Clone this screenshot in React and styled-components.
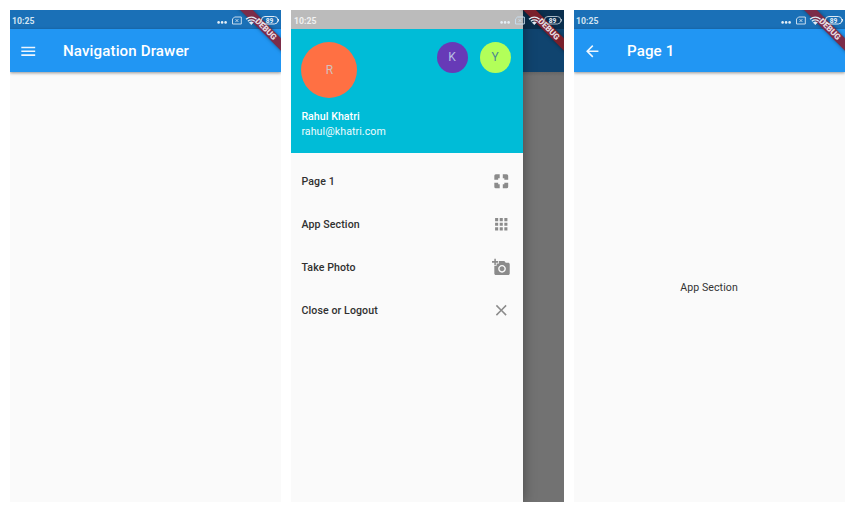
import React from "react";
import styled, { createGlobalStyle } from "styled-components";
import { MdMenu, MdArrowBack, MdApps, MdAddAPhoto, MdClose } from "react-icons/md";

const GlobalStyle = createGlobalStyle`
  * { box-sizing: border-box; }
  body { margin: 0; background: #fff; font-family: Roboto, sans-serif; }
`;

const Gallery = styled.main`
  display: flex;
  gap: 10px;
  width: 855px;
  height: 512px;
  padding: 10px;
`;

const Phone = styled.section`
  position: relative;
  display: flex;
  flex-direction: column;
  flex: none;
  width: ${(p) => p.$width || 271}px;
  height: 492px;
  overflow: hidden;
  background: #fafafa;
`;

const StatusBar = styled.header`
  display: flex;
  align-items: center;
  justify-content: space-between;
  flex: none;
  height: 19px;
  padding: 2px 2px 0 ${(p) => p.$start || 2}px;
  color: #e2edf6;
  background: #1a70b7;
`;

const Clock = styled.time`
  font-size: 8.7px;
  font-weight: 700;
  line-height: 12px;
  color: ${(p) => p.$color || "#d3e4f2"};
`;

const StatusIcons = styled.div`
  position: relative;
  z-index: 4;
  display: flex;
  height: 12px;
`;

const AppBar = styled.nav`
  position: relative;
  display: flex;
  align-items: center;
  flex: none;
  height: 43px;
  padding: 1px 10px 0 9px;
  gap: 25.5px;
  color: #fff;
  background: #2196f3;
  box-shadow: 0 1px 3px rgba(0, 0, 0, 0.42);

  svg { width: 18.5px; height: 18.5px; opacity: 0.92; }
`;

const Title = styled.h1`
  margin: 0;
  font-size: 15.1px;
  font-weight: 500;
  line-height: 20px;
  letter-spacing: 0.12px;
  white-space: nowrap;
`;

const Ribbon = styled.div`
  position: absolute;
  z-index: 3;
  top: 12.5px;
  right: -23px;
  width: 80px;
  height: 9px;
  padding-left: 5px;
  transform: rotate(45deg);
  background: ${(p) => p.$color || "#7b2c49"};
  box-shadow: 0 0 4px rgba(0, 0, 0, 0.4);
  color: #e9dce0;
  font-size: 8.3px;
  font-weight: 900;
  line-height: 9px;
  text-align: center;
`;

const Body = styled.div`
  display: flex;
  flex: 1;
  align-items: center;
  justify-content: center;
  padding: 1px 1px 0 0;
  font-size: 10.6px;
  line-height: 15px;
  color: #333;
  letter-spacing: 0.08px;
`;

const Scrim = styled.div`
  position: absolute;
  inset: 0;
  z-index: 1;
  background: linear-gradient(to bottom, #0a2f4e 0 19px, #10446f 19px 62px, #656565 62px, #727272 66px);
`;

const Drawer = styled.aside`
  position: absolute;
  z-index: 2;
  inset: 0 auto 0 0;
  width: 231.5px;
  background: #fafafa;
  box-shadow: 0 0 12px rgba(0, 0, 0, 0.38);
`;

const DrawerTop = styled.div`
  height: 19px;
  background: #bbb;
`;

const FloatingStatus = styled(StatusBar)`
  position: absolute;
  z-index: 4;
  inset: 0 0 auto;
  background: transparent;
`;

const Account = styled.div`
  height: 124px;
  padding: 12.5px 12px 0 10.4px;
  color: #fff;
  background: #00bcd7;
`;

const Avatars = styled.div`
  display: flex;
  align-items: flex-start;
  height: 56px;
`;

const Avatar = styled.div`
  display: grid;
  place-items: center;
  width: ${(p) => p.$size}px;
  height: ${(p) => p.$size}px;
  border-radius: 50%;
  background: ${(p) => p.$bg};
  color: ${(p) => p.$color};
  font-size: 12px;
  line-height: 14px;
`;

const Others = styled.div`
  display: flex;
  gap: 12px;
  margin-left: auto;
`;

const Name = styled.div`
  margin-top: 11.5px;
  font-size: 10.6px;
  font-weight: 500;
  line-height: 15px;
  letter-spacing: 0.05px;
`;

const Email = styled.div`
  font-size: 10.6px;
  line-height: 15px;
  letter-spacing: 0.08px;
  color: #effbfd;
`;

const Menu = styled.ul`
  margin: 0;
  padding: 6px 12px 0 10.5px;
  list-style: none;
`;

const MenuItem = styled.li`
  display: flex;
  align-items: center;
  justify-content: space-between;
  height: 43px;
  padding-top: 1px;
  color: #303030;
  font-size: 10.6px;
  font-weight: 500;
  letter-spacing: 0.09px;

  svg { width: 18.5px; height: 18.5px; color: #8b8b8b; }
`;

const MenuLabel = styled.span`
  padding-top: 1px;
`;

function Brackets() {
  return (
    <svg viewBox="0 0 24 24" fill="currentColor">
      <path d="M3 5v5h5V8h2V3H5a2 2 0 0 0-2 2ZM8 14H3v5a2 2 0 0 0 2 2h5v-5H8ZM16 16h-2v5h5a2 2 0 0 0 2-2v-5h-5ZM19 3h-5v5h2v2h5V5a2 2 0 0 0-2-2Z" />
    </svg>
  );
}

function Indicators({ battery = "#dce9f4" }) {
  return (
    <StatusIcons>
      <svg width="62" height="12" viewBox="0 0 62 12" fill="none">
        <g fill="#e6eff6">
          <circle cx="1.6" cy="7.4" r="1.3" />
          <circle cx="5.1" cy="7.4" r="1.3" />
          <circle cx="8.6" cy="7.4" r="1.3" />
        </g>
        <g stroke="#c7dced" strokeWidth="1">
          <path d="M17.5 2h6.8v7h-8.8V4Z" />
          <path d="m18.6 4.2 2.7 2.7m0-2.7-2.7 2.7" />
        </g>
        <g stroke="#e2edf5" strokeWidth="1.3">
          <path d="M29 4.2q5.3-4 10.6 0M30.8 6.2q3.5-2.6 7 0" />
          <path d="m32.2 7.5 2.1 2.2 2.1-2.2q-2.1-1.3-4.2 0Z" fill="#e2edf5" strokeWidth=".5" />
        </g>
        <rect x="44.5" y="1.5" width="16.3" height="7.5" rx="3.5" stroke={battery} strokeWidth="1" />
        <path d="M61.5 4v2.5" stroke={battery} />
        <text x="52.6" y="7.7" textAnchor="middle" fill="#e6f0f7" fontFamily="Roboto, sans-serif" fontSize="6.6" fontWeight="700">89</text>
      </svg>
    </StatusIcons>
  );
}

const menu = [
  ["Page 1", Brackets],
  ["App Section", MdApps],
  ["Take Photo", MdAddAPhoto],
  ["Close or Logout", MdClose],
];

function HomeScreen() {
  return (
    <Phone>
      <StatusBar><Clock>10:25</Clock><Indicators /></StatusBar>
      <AppBar><MdMenu /><Title>Navigation Drawer</Title></AppBar>
      <Ribbon>DEBUG</Ribbon>
    </Phone>
  );
}

function DrawerScreen() {
  return (
    <Phone $width={273}>
      <Scrim />
      <Drawer>
        <DrawerTop />
        <Account>
          <Avatars>
            <Avatar $size={56} $bg="#ff7043" $color="#d3c0bd">R</Avatar>
            <Others>
              <Avatar $size={31} $bg="#673ab7" $color="#b7bfe3">K</Avatar>
              <Avatar $size={31} $bg="#b2ff59" $color="#4d898f">Y</Avatar>
            </Others>
          </Avatars>
          <Name>Rahul Khatri</Name>
          <Email>rahul@khatri.com</Email>
        </Account>
        <Menu>
          {menu.map(([label, Icon]) => (
            <MenuItem key={label}><MenuLabel>{label}</MenuLabel><Icon /></MenuItem>
          ))}
        </Menu>
      </Drawer>
      <Ribbon $color="#7a202b">DEBUG</Ribbon>
      <FloatingStatus $start={3}><Clock $color="#f1f1f1">10:25</Clock><Indicators battery="#a9b8c4" /></FloatingStatus>
    </Phone>
  );
}

function PageScreen() {
  return (
    <Phone>
      <StatusBar><Clock>10:25</Clock><Indicators /></StatusBar>
      <AppBar><MdArrowBack /><Title>Page 1</Title></AppBar>
      <Body>App Section</Body>
      <Ribbon>DEBUG</Ribbon>
    </Phone>
  );
}

export default function App() {
  return (
    <>
      <GlobalStyle />
      <Gallery>
        <HomeScreen />
        <DrawerScreen />
        <PageScreen />
      </Gallery>
    </>
  );
}
